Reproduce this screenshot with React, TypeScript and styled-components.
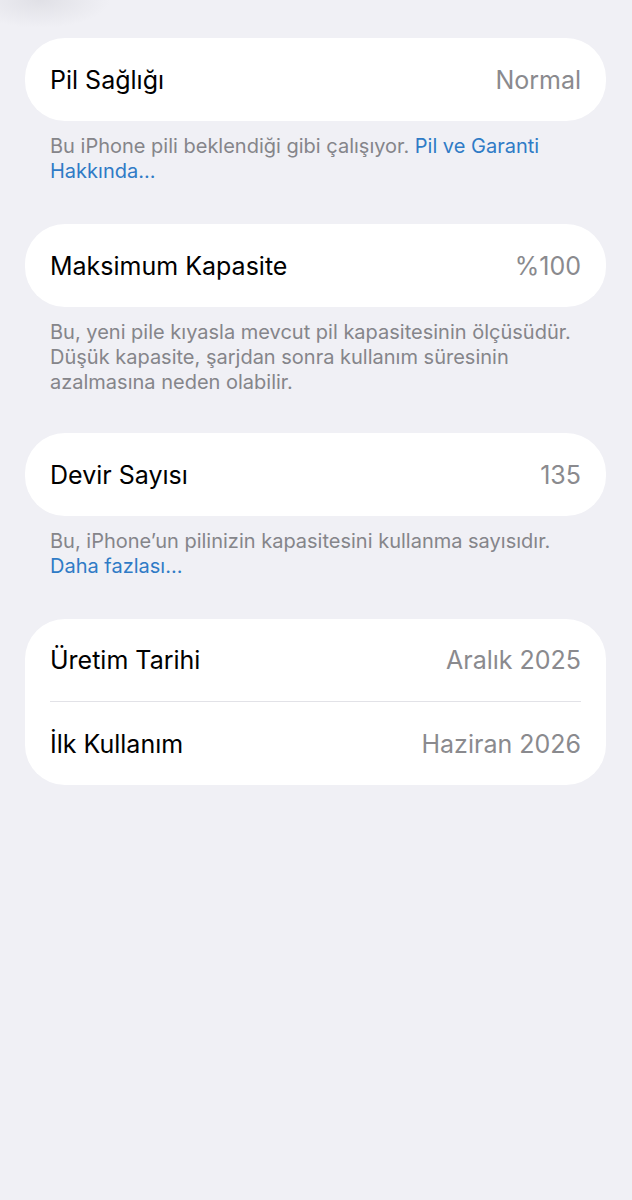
import React from "react";
import styled, { createGlobalStyle } from "styled-components";

const GlobalStyle = createGlobalStyle`
    html, body {
        margin: 0;
        padding: 0;
        background-color: #f0f0f5;
    }
    body {
        font-family: Inter, "Noto Sans", "Liberation Sans", sans-serif;
        -webkit-font-smoothing: antialiased;
    }
`;

const Page = styled.div`
    min-height: 1200px;
    box-sizing: border-box;
    padding: 38px 26px 40px 25px;
    background:
        radial-gradient(ellipse 70px 28px at 40px 0px, rgba(205, 205, 212, 0.45), rgba(205, 205, 212, 0) 100%),
        #f0f0f5;
`;

const Section = styled.section<{ $gap?: number }>`
    margin-bottom: ${(p) => p.$gap ?? 40}px;
`;

const Card = styled.div`
    background-color: #ffffff;
    border-radius: 40px;
    padding: 0 25px;
`;

const Row = styled.div<{ $divider?: boolean }>`
    height: 83px;
    display: flex;
    align-items: center;
    justify-content: space-between;
    border-bottom: ${(p) => (p.$divider ? "1px solid #e2e2e7" : "none")};
    box-sizing: border-box;
    font-size: 25px;
    letter-spacing: 0;
`;

const Label = styled.span`
    color: #000000;
`;

const Value = styled.span`
    color: #8a8a8e;
`;

const Footer = styled.p`
    margin: 13px 0 0;
    padding: 0 25px;
    font-size: 20px;
    line-height: 25px;
    color: #85858a;
    letter-spacing: 0;

    a {
        color: #2f7bc6;
        text-decoration: none;
    }
`;

type Item = { label: string; value: string };

const InfoCard = ({ items }: { items: Item[] }) => (
    <Card>
        {items.map((item, index) => (
            <Row key={item.label} $divider={index < items.length - 1}>
                <Label>{item.label}</Label>
                <Value>{item.value}</Value>
            </Row>
        ))}
    </Card>
);

const App = () => {
    return (
        <>
            <GlobalStyle />
            <Page>
                <Section>
                    <InfoCard items={[{ label: "Pil Sağlığı", value: "Normal" }]} />
                    <Footer>
                        Bu iPhone pili beklendiği gibi çalışıyor.{" "}
                        <a href="#">Pil ve Garanti Hakkında...</a>
                    </Footer>
                </Section>
                <Section $gap={38}>
                    <InfoCard items={[{ label: "Maksimum Kapasite", value: "%100" }]} />
                    <Footer>
                        Bu, yeni pile kıyasla mevcut pil kapasitesinin ölçüsüdür.
                        <br />
                        Düşük kapasite, şarjdan sonra kullanım süresinin
                        <br />
                        azalmasına neden olabilir.
                    </Footer>
                </Section>
                <Section>
                    <InfoCard items={[{ label: "Devir Sayısı", value: "135" }]} />
                    <Footer>
                        Bu, iPhone’un pilinizin kapasitesini kullanma sayısıdır.
                        <br />
                        <a href="#">Daha fazlası...</a>
                    </Footer>
                </Section>
                <Section>
                    <InfoCard
                        items={[
                            { label: "Üretim Tarihi", value: "Aralık 2025" },
                            { label: "İlk Kullanım", value: "Haziran 2026" },
                        ]}
                    />
                </Section>
            </Page>
        </>
    );
};

export default App;
